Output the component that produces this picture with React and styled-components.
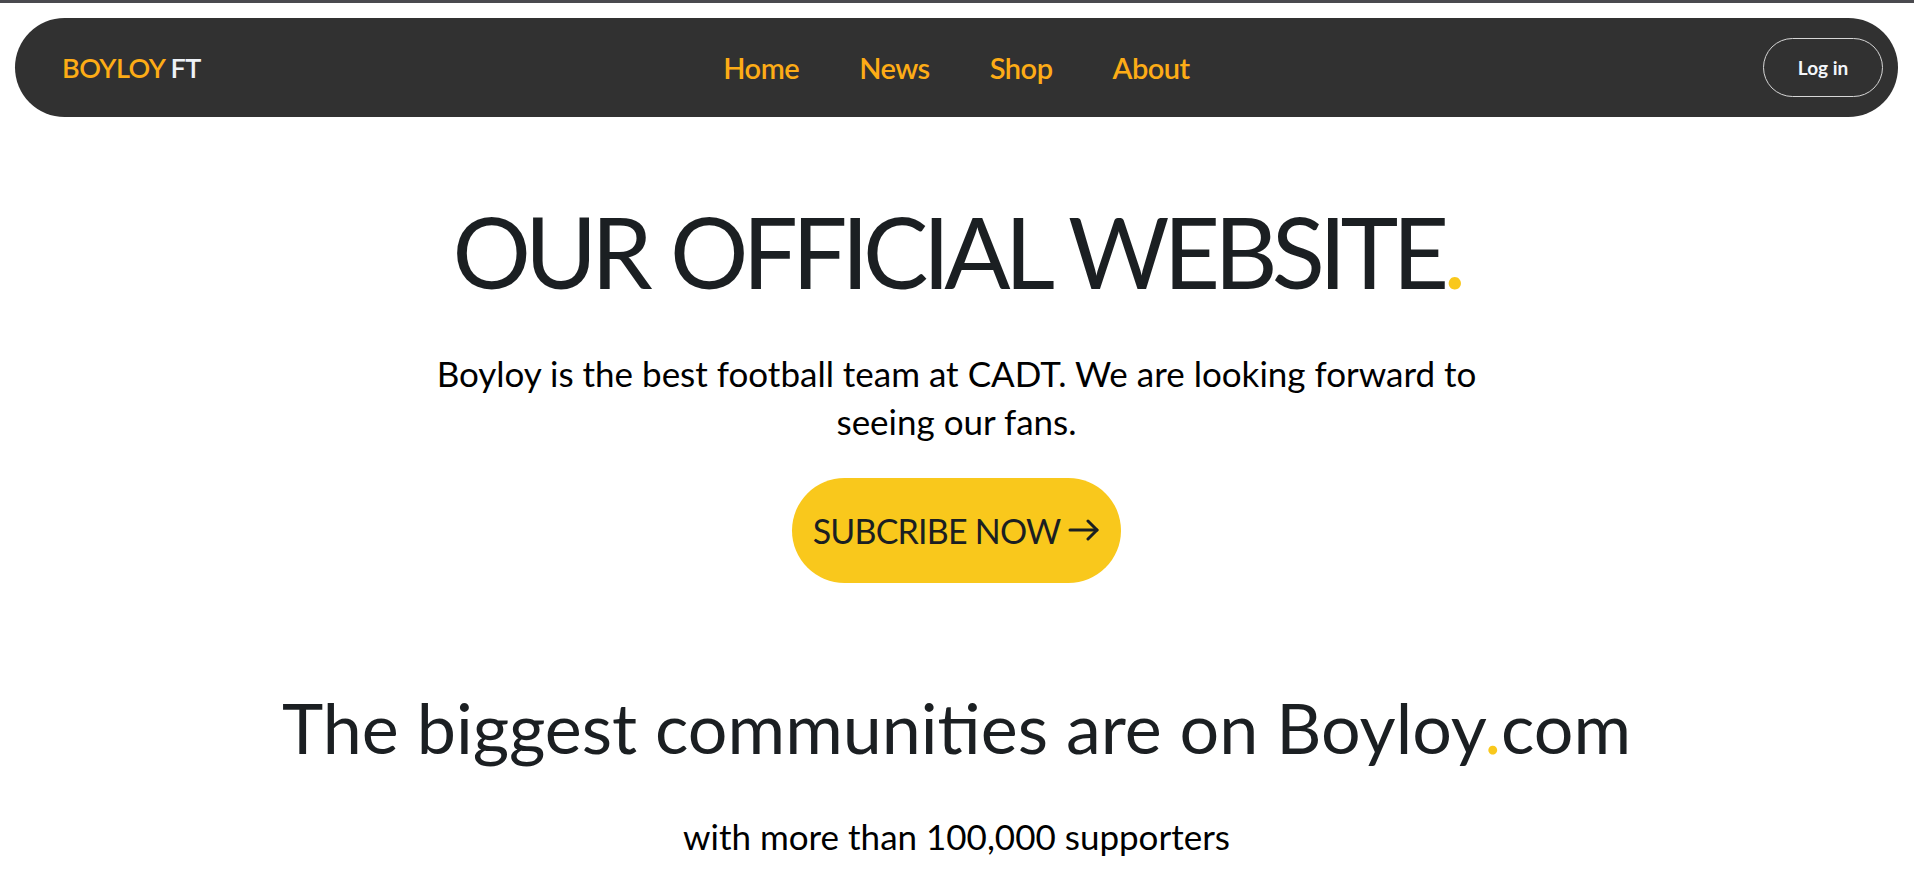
import React from "react";
import styled, { createGlobalStyle } from "styled-components";

const links = [
    { id: 1, text: "Home", url: "#" },
    { id: 2, text: "News", url: "#" },
    { id: 3, text: "Shop", url: "#" },
    { id: 4, text: "About", url: "#" },
];

const GlobalStyle = createGlobalStyle`
    * {
        box-sizing: border-box;
    }
    body {
        margin: 0;
        background: #fff;
        font-family: "Lato", "Noto Sans", sans-serif;
        color: #1b1f22;
    }
`;

const App = () => {
    return (
        <>
            <GlobalStyle />
            <Page>
                <Navbar>
                    <Logo href="#">BOYLOY <span>FT</span></Logo>
                    <NavLinks>
                        {links.map(link => (
                            <NavLink href={link.url} key={link.id}>{link.text}</NavLink>
                        ))}
                    </NavLinks>
                    <Actions>
                        <LoginBtn type="button">Log in</LoginBtn>
                    </Actions>
                </Navbar>

                <Hero>
                    <Title>OUR OFFICIAL WEBSITE<Dot>.</Dot></Title>
                    <Lead>Boyloy is the best football team at CADT. We are looking forward to seeing our fans.</Lead>
                    <SubscribeBtn type="button">
                        SUBCRIBE NOW
                        <svg width="32" height="22" viewBox="0 0 32 22" fill="none" stroke="currentColor"
                            strokeWidth="3" strokeLinecap="round" strokeLinejoin="round">
                            <path d="M2 11h27" />
                            <path d="M20 2l9 9-9 9" />
                        </svg>
                    </SubscribeBtn>
                </Hero>

                <Community>
                    <SubTitle>The biggest communities are on Boyloy<Dot>.</Dot>com</SubTitle>
                    <Note>with more than 100,000 supporters</Note>
                </Community>
            </Page>
        </>
    );
}

const Page = styled.div`
    min-height: 891px;
    border-top: 3px solid #4a4a4f;
    padding: 15px 16px 0 15px;
    overflow: hidden;
`

const Navbar = styled.nav`
    display: grid;
    grid-template-columns: 1fr auto 1fr;
    align-items: center;
    height: 99px;
    padding: 0 15px;
    border-radius: 50px;
    background-color: #313131;
`

const Logo = styled.a`
    justify-self: start;
    margin-left: 32px;
    font-size: 27px;
    font-weight: 600;
    color: #fdac16;
    text-decoration: none;
    letter-spacing: -0.5px;

    span {
        color: #eef2f7;
    }
`

const NavLinks = styled.div`
    display: flex;
    gap: 60px;
`

const NavLink = styled.a`
    font-size: 29px;
    font-weight: 600;
    color: #fdac16;
    text-decoration: none;
    letter-spacing: -0.5px;
`

const Actions = styled.div`
    display: flex;
    justify-content: flex-end;
`

const LoginBtn = styled.button`
    width: 120px;
    height: 59px;
    border: 1px solid #d6d6d6;
    border-radius: 30px;
    background: transparent;
    color: #f3f6fa;
    font-family: "Lato", sans-serif;
    font-weight: 700;
    font-size: 19px;
    cursor: pointer;
`

const Hero = styled.section`
    display: flex;
    flex-direction: column;
    align-items: center;
    text-align: center;
    padding-top: 76px;
`

const Title = styled.h1`
    margin: 0;
    font-size: 98px;
    font-weight: 400;
    line-height: 1.2;
    letter-spacing: -5.9px;
    word-spacing: 4px;
    color: #1b1f22;
`

const Dot = styled.span`
    color: #f9c81c;
`

const Lead = styled.p`
    max-width: 1050px;
    margin: 38px 0 0;
    font-size: 35px;
    line-height: 48px;
    color: #000;
`

const SubscribeBtn = styled.button`
    display: flex;
    align-items: center;
    justify-content: center;
    gap: 8px;
    width: 329px;
    height: 105px;
    margin-top: 33px;
    border: none;
    border-radius: 53px;
    background-color: #f9c81c;
    color: #1b1f22;
    font-family: "Lato", sans-serif;
    font-size: 34px;
    letter-spacing: -0.8px;
    cursor: pointer;
`

const Community = styled.section`
    display: flex;
    flex-direction: column;
    align-items: center;
    text-align: center;
    padding-top: 102px;
`

const SubTitle = styled.h2`
    margin: 0;
    font-size: 70px;
    font-weight: 400;
    line-height: 1.2;
    color: #1b1f22;
`

const Note = styled.p`
    margin: 46px 0 0;
    font-size: 35px;
    color: #000;
`

export default App;
